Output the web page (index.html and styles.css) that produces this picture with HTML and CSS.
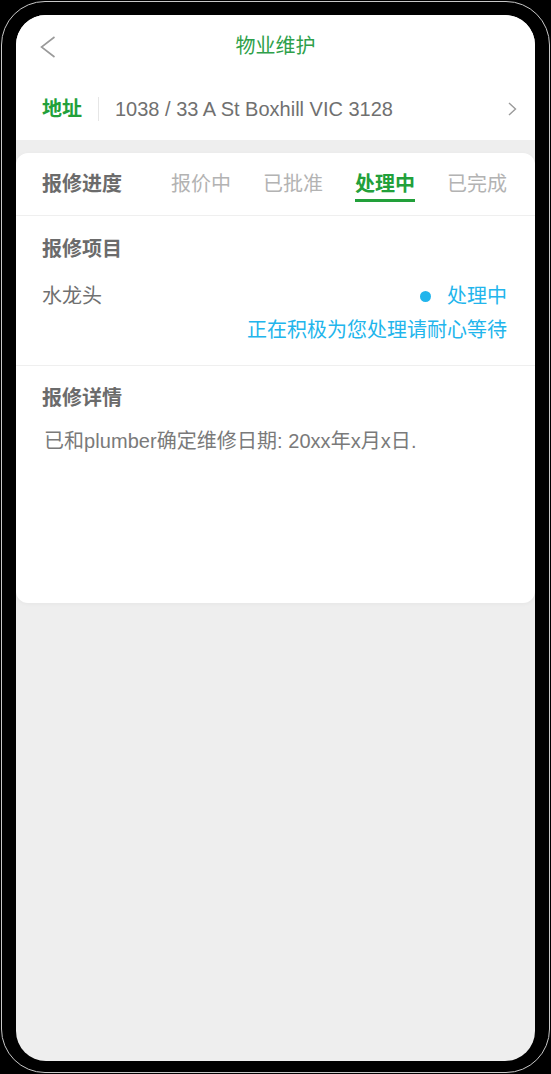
FILE: index.html
```html
<!DOCTYPE html>
<html lang="zh">
<head>
  <meta charset="UTF-8" />
  <meta name="viewport" content="width=device-width, initial-scale=1.0" />
  <title>物业维护</title>
  <link rel="stylesheet" href="styles.css">
</head>
<body>
  <div class="phone">
    <div class="screen">
      <header class="header">
        <div class="navbar">
          <svg class="back" width="16" height="22" viewBox="0 0 16 22">
            <polyline points="14.5,1 1.5,11 14.5,21" fill="none" stroke="#9a9a9a" stroke-width="1.6" />
          </svg>
          <div class="title">物业维护</div>
        </div>
        <div class="address">
          <span class="address-label">地址</span>
          <span class="address-sep"></span>
          <span class="address-text">1038 / 33 A St Boxhill VIC 3128</span>
          <svg class="more" width="9" height="14" viewBox="0 0 9 14">
            <polyline points="1,1 7.5,7 1,13" fill="none" stroke="#9a9a9a" stroke-width="1.4" />
          </svg>
        </div>
      </header>

      <div class="card">
        <div class="tabs">
          <span class="tabs-title">报修进度</span>
          <div class="tab-list">
            <span class="tab">报价中</span>
            <span class="tab">已批准</span>
            <span class="tab active">处理中</span>
            <span class="tab">已完成</span>
          </div>
        </div>

        <section class="section">
          <h2 class="section-title">报修项目</h2>
          <div class="item-row">
            <span class="item-name">水龙头</span>
            <div class="item-status">
              <div class="status"><span class="dot"></span>处理中</div>
              <div class="status-note">正在积极为您处理请耐心等待</div>
            </div>
          </div>
        </section>

        <section class="section detail">
          <h2 class="section-title">报修详情</h2>
          <p class="detail-text">已和plumber确定维修日期: 20xx年x月x日.</p>
        </section>
      </div>
    </div>
  </div>
</body>
</html>
```

FILE: styles.css
```css
body {
  margin: 0;
  background: #000;
  font-family: "Liberation Sans", "Noto Sans CJK SC", sans-serif;
}
.phone {
  box-sizing: border-box;
  width: 549px;
  height: 1072px;
  margin: 1px;
  border: 1px solid #c8c8c8;
  border-radius: 44px;
  padding: 13px 14px 11px;
}
.screen {
  height: 100%;
  background: #eeeeee;
  border-radius: 30px;
  overflow: hidden;
}
.header {
  background: #fff;
}
.navbar {
  position: relative;
  height: 62px;
  display: flex;
  align-items: center;
  justify-content: center;
}
.back {
  position: absolute;
  left: 24px;
  top: 21px;
}
.title {
  color: #2ea04a;
  font-size: 20px;
  line-height: 22px;
}
.address {
  height: 63px;
  display: flex;
  align-items: center;
  padding: 0 18px 0 26px;
}
.address-label {
  color: #22a03a;
  font-size: 20px;
  font-weight: bold;
  line-height: 22px;
}
.address-sep {
  width: 1px;
  height: 24px;
  background: #e6e6e6;
  margin: 0 16px 0 16px;
}
.address-text {
  flex: 1;
  color: #707070;
  font-size: 20px;
  line-height: 22px;
}
.card {
  margin-top: 13px;
  background: #fff;
  border-radius: 12px;
  box-shadow: 0 1px 4px rgba(0, 0, 0, 0.04);
}
.tabs {
  height: 62px;
  display: flex;
  align-items: center;
  padding: 0 28px 0 26px;
  border-bottom: 1px solid #efefef;
}
.tabs-title {
  color: #6b6b6b;
  font-size: 20px;
  font-weight: bold;
  line-height: 22px;
}
.tab-list {
  margin-left: auto;
  display: flex;
  gap: 32px;
}
.tab {
  color: #b3b3b3;
  font-size: 20px;
  line-height: 22px;
  padding: 7px 0 4px;
  border-bottom: 3px solid transparent;
}
.tab.active {
  color: #22a03a;
  font-weight: bold;
  border-bottom-color: #22a03a;
}
.section {
  padding: 23px 28px 25px 26px;
  border-bottom: 1px solid #efefef;
}
.section-title {
  margin: 0;
  color: #6b6b6b;
  font-size: 20px;
  font-weight: bold;
  line-height: 20px;
}
.item-row {
  margin-top: 27px;
  display: flex;
  justify-content: space-between;
  align-items: flex-start;
}
.item-name {
  color: #707070;
  font-size: 20px;
  line-height: 20px;
}
.item-status {
  display: flex;
  flex-direction: column;
  align-items: flex-end;
  gap: 14px;
  color: #22b5ec;
  font-size: 20px;
  line-height: 20px;
}
.status {
  display: flex;
  align-items: center;
}
.dot {
  width: 11px;
  height: 11px;
  border-radius: 50%;
  background: #22b5ec;
  margin-right: 16px;
}
.detail {
  border-bottom: none;
  height: 237px;
  box-sizing: border-box;
  padding-top: 22px;
}
.detail-text {
  margin: 23px 0 0;
  padding-left: 2px;
  color: #7a7a7a;
  font-size: 20px;
  line-height: 20px;
  letter-spacing: 0.05px;
}
```
